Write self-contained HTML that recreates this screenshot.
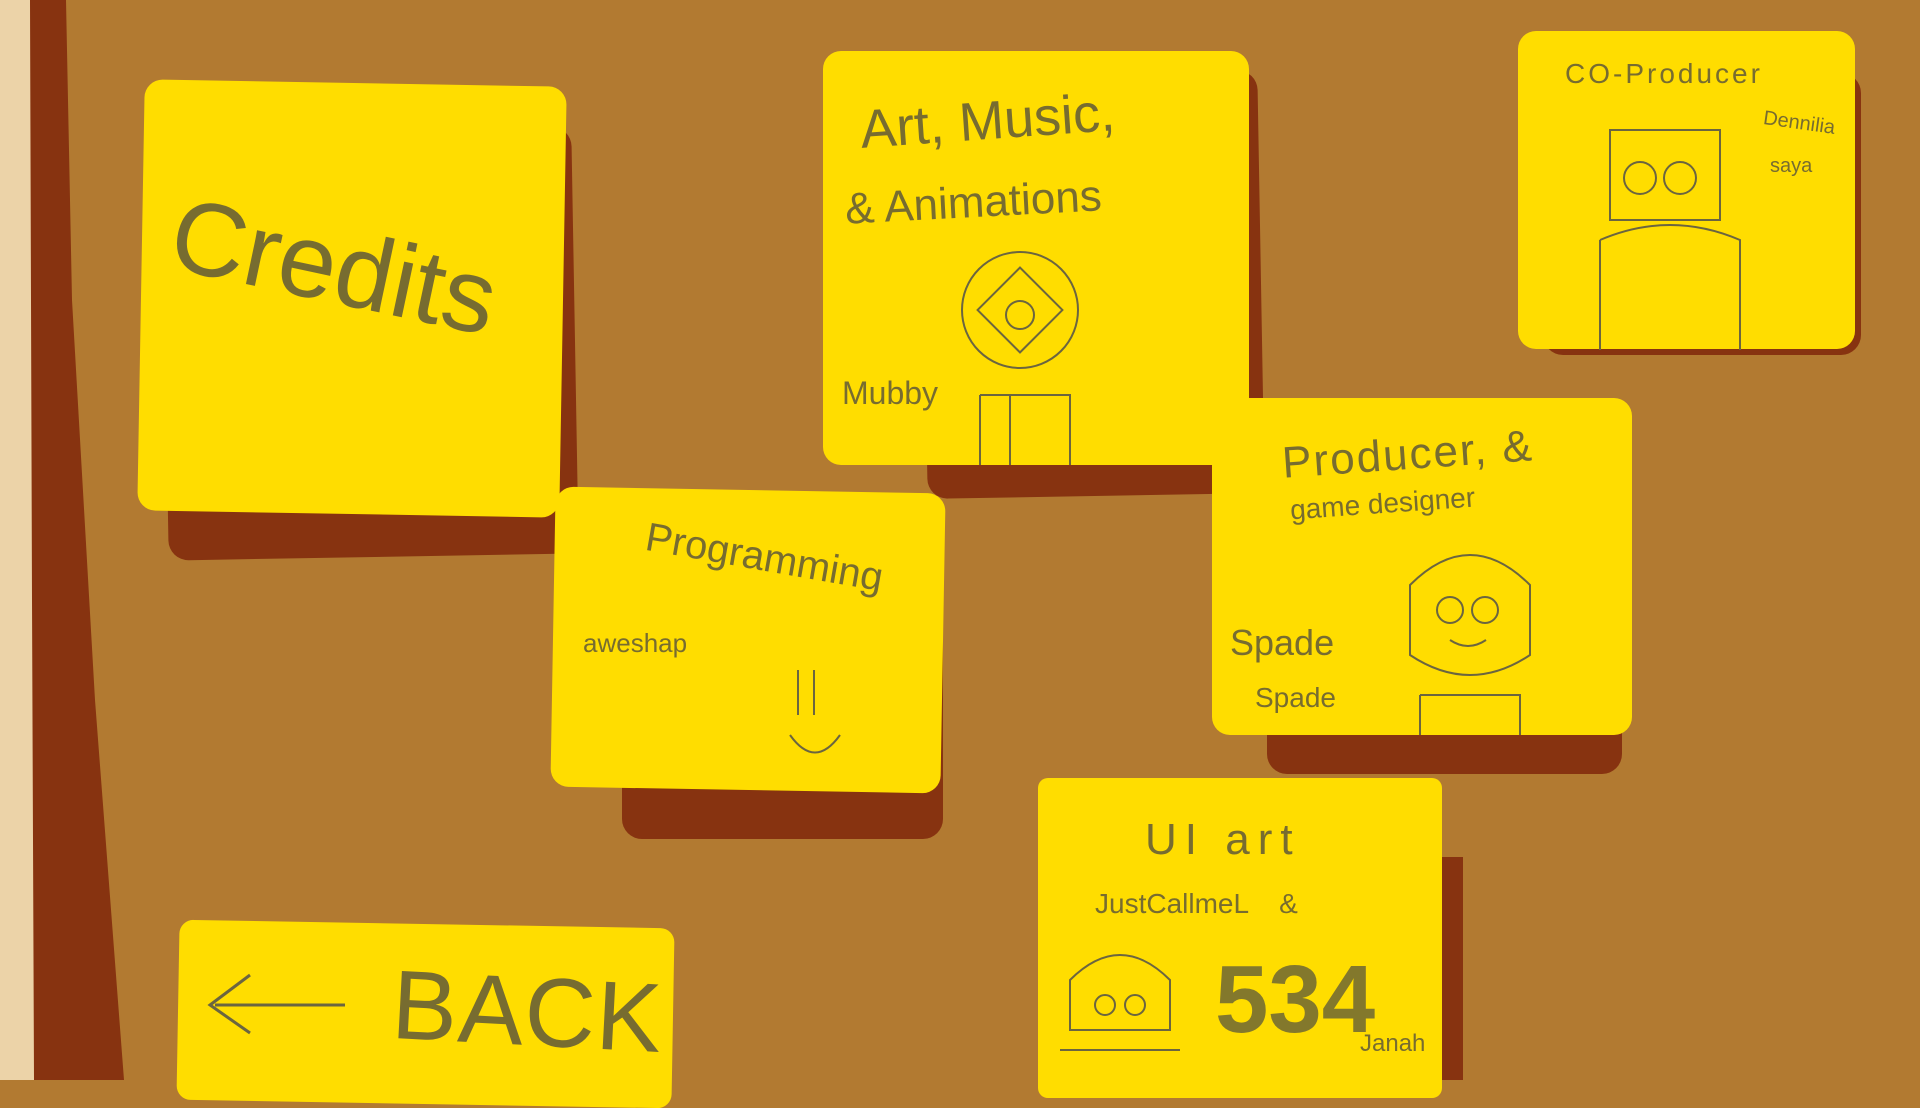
<!DOCTYPE html>
<html><head><meta charset="utf-8"><style>
*{margin:0;padding:0;box-sizing:border-box}
html,body{width:1920px;height:1080px;overflow:hidden;background:#b27a31;font-family:"Liberation Sans",sans-serif}
.a{position:absolute}
.y{background:#ffdd00;border-radius:18px}
.s{background:#873310;border-radius:20px}
.t{position:absolute;color:rgba(85,80,60,0.8);font-weight:normal;white-space:nowrap}
</style></head><body>
<div class="a" style="left:0;top:0;width:34px;height:1080px;background:#ecd3a8"></div>
<svg class="a" style="left:0;top:0" width="1920" height="1080"><polygon points="30,0 66,0 72,300 95,700 124,1080 34,1080 32,600" fill="#873310"/></svg>

<!-- credits -->
<div class="a s" style="left:165px;top:130px;width:410px;height:427px;transform:rotate(-1deg)"></div>
<div class="a y" style="left:141px;top:83px;width:422px;height:431px;transform:rotate(1deg)"></div>
<div class="t" style="left:185px;top:175px;font-size:104px;transform:rotate(12deg);transform-origin:left top">Credits</div>

<!-- art music -->
<div class="a s" style="left:924px;top:73px;width:337px;height:423px;transform:rotate(-1deg)"></div>
<div class="a y" style="left:823px;top:51px;width:426px;height:414px"></div>
<div class="t" style="left:860px;top:90px;font-size:54px;transform:rotate(-4deg)">Art, Music,</div>
<div class="t" style="left:845px;top:178px;font-size:44px;transform:rotate(-3deg)">&amp; Animations</div>
<div class="t" style="left:842px;top:375px;font-size:32px">Mubby</div>
<svg class="a" style="left:950px;top:235px" width="170" height="230"><g fill="none" stroke="#6b6540" stroke-width="2"><circle cx="70" cy="75" r="58"/><rect x="40" y="45" width="60" height="60" transform="rotate(45 70 75)"/><circle cx="70" cy="80" r="14"/><path d="M30 160 h90 v70 M30 160 v70 M60 160 v70"/></g></svg>

<!-- co-producer -->
<div class="a s" style="left:1543px;top:73px;width:318px;height:282px"></div>
<div class="a y" style="left:1518px;top:31px;width:337px;height:318px"></div>
<div class="t" style="left:1565px;top:58px;font-size:28px;letter-spacing:3px">CO-Producer</div>
<div class="t" style="left:1763px;top:112px;font-size:20px;transform:rotate(8deg)">Dennilia</div>
<div class="t" style="left:1770px;top:155px;font-size:20px">saya</div>
<svg class="a" style="left:1580px;top:100px" width="190" height="250"><g fill="none" stroke="#6b6540" stroke-width="2"><path d="M30 30 h110 v90 h-110z"/><circle cx="60" cy="78" r="16"/><circle cx="100" cy="78" r="16"/><path d="M20 140 q70 -30 140 0 v110 M20 140 v110"/></g></svg>

<!-- programming -->
<div class="a s" style="left:622px;top:514px;width:321px;height:325px"></div>
<div class="a y" style="left:553px;top:490px;width:390px;height:300px;transform:rotate(1deg)"></div>
<div class="t" style="left:650px;top:515px;font-size:40px;transform:rotate(10deg);transform-origin:left top">Programming</div>
<div class="t" style="left:583px;top:628px;font-size:26px">aweshap</div>
<svg class="a" style="left:780px;top:660px" width="70" height="110"><g fill="none" stroke="#6b6540" stroke-width="2"><path d="M18 10v45M34 10v45M10 75q25 35 50 0"/></g></svg>

<!-- producer -->
<div class="a s" style="left:1267px;top:416px;width:355px;height:358px"></div>
<div class="a y" style="left:1212px;top:398px;width:420px;height:337px"></div>
<div class="t" style="left:1282px;top:430px;font-size:44px;letter-spacing:2px;transform:rotate(-4deg)">Producer, &amp;</div>
<div class="t" style="left:1290px;top:488px;font-size:28px;transform:rotate(-4deg)">game designer</div>
<div class="t" style="left:1230px;top:622px;font-size:36px">Spade</div>
<div class="t" style="left:1255px;top:682px;font-size:28px">Spade</div>
<svg class="a" style="left:1380px;top:525px" width="180" height="210"><g fill="none" stroke="#6b6540" stroke-width="2"><path d="M30 60 q60 -60 120 0 v70 q-60 40 -120 0z"/><circle cx="70" cy="85" r="13"/><circle cx="105" cy="85" r="13"/><path d="M70 115 q18 12 36 0M40 170 h100 v40 M40 170 v40"/></g></svg>

<!-- UI art -->
<div class="a" style="left:1438px;top:857px;width:25px;height:223px;background:#873310"></div>
<div class="a y" style="left:1038px;top:778px;width:404px;height:320px;border-radius:10px"></div>
<div class="t" style="left:1145px;top:815px;font-size:44px;letter-spacing:8px">UI art</div>
<div class="t" style="left:1095px;top:888px;font-size:28px">JustCallmeL &nbsp; &nbsp;&amp;</div>
<div class="t" style="left:1215px;top:945px;font-size:96px;font-weight:bold;color:rgba(100,95,55,0.8)">534</div>
<div class="t" style="left:1360px;top:1030px;font-size:24px">Janah</div>
<svg class="a" style="left:1050px;top:940px" width="140" height="140"><g fill="none" stroke="#6b6540" stroke-width="2"><path d="M20 40 q50 -50 100 0 v50 h-100z"/><circle cx="55" cy="65" r="10"/><circle cx="85" cy="65" r="10"/><path d="M10 110 h120"/></g></svg>

<!-- back -->
<div class="a y" style="left:178px;top:924px;width:495px;height:180px;border-radius:14px;transform:rotate(1deg)"></div>
<svg class="a" style="left:195px;top:970px" width="160" height="70"><g fill="none" stroke="#6b6540" stroke-width="3"><path d="M150 35H20M55 5L15 35l40 28"/></g></svg>
<div class="t" style="left:392px;top:955px;font-size:98px;letter-spacing:1px;transform:rotate(3deg)">BACK</div>
</body></html>
